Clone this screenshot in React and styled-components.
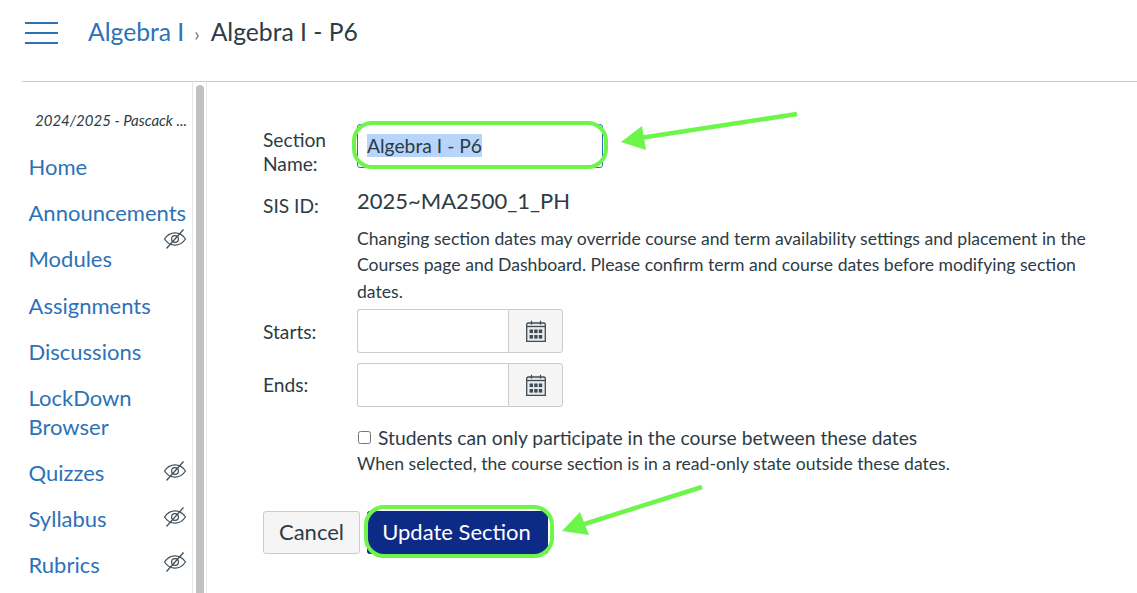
import React from 'react';
import styled, { createGlobalStyle } from 'styled-components';

const Global = createGlobalStyle`
  html, body { margin: 0; padding: 0; height: 593px; overflow: hidden; background: #fff; }
  body { font-family: Lato, "Open Sans", sans-serif; color: #2d3b45; }
  * { box-sizing: border-box; }
`;
const Page = styled.div`position: relative; width: 1137px; height: 593px; overflow: hidden;`;
const Header = styled.header`display: flex; align-items: center; height: 81px; padding: 0 0 15px 25px;`;
const Burger = styled.button`
  display: flex; flex-direction: column; justify-content: space-between; width: 33px; height: 22px;
  padding: 0; border: 0; background: none; margin: 0 30px 0 0;
  span { display: block; height: 2px; background: #2d72b8; }
`;
const Crumbs = styled.nav`display: flex; align-items: baseline; font-size: 24.7px; line-height: 30px;`;
const CrumbLink = styled.a`color: #2d72b8;`;
const CrumbSep = styled.span`font-size: 19px; color: #6b7780; margin: 0 11px 0 10px;`;
const Body = styled.div`display: flex; height: 512px; margin-left: 22px; border-top: 1px solid #c7cdd1;`;
const Sidebar = styled.aside`width: 170px; flex: none; padding-top: 28px;`;
const Term = styled.div`
  font-size: 15px; font-style: italic; line-height: 20px; padding-left: 13px; white-space: nowrap;
  overflow: hidden; text-overflow: ellipsis; margin-bottom: 22px;
`;
const NavList = styled.ul`list-style: none; margin: 0; padding: 0 0 0 6.5px;`;
const NavItem = styled.li`
  position: relative; font-size: 22px; line-height: 29px; color: #2d72b8; margin-bottom: 17.18px; white-space: pre-line;
`;
const EyeSlot = styled.span`position: absolute; left: 134.5px; top: ${p => p.$top}px; display: block; line-height: 0;`;
const Track = styled.div`
  width: 15px; flex: none; padding: 3px 2px 0 3px; border-left: 1px solid #e8e8e8; border-right: 1px solid #e8e8e8;
`;
const Thumb = styled.div`height: 100%; background: #c1c1c1; border-radius: 4px 4px 0 0;`;
const Main = styled.main`flex: 1; padding: 42px 0 0 56px; position: relative;`;
const Row = styled.div`display: grid; grid-template-columns: 94px 1fr; align-items: start; margin-bottom: ${p => p.$mb || 0}px;`;
const Label = styled.label`display: block; font-size: 19.2px; line-height: 24px; margin-top: ${p => p.$mt || 0}px;`;
const NameBox = styled.div`
  position: relative; width: 246px; height: 44px; display: flex; align-items: center; padding: 0 0 2px 9px;
  border: 1px solid #2d72b8; border-radius: 3px; font-size: 19.3px;
`;
const Selected = styled.span`background: #b7d5fb; line-height: 23px;`;
const Ring = styled.span`
  position: absolute; border: 4.5px solid #6ef54c; pointer-events: none;
  left: ${p => p.$l}px; right: ${p => p.$r}px; top: ${p => p.$t}px; bottom: ${p => p.$b}px; border-radius: ${p => p.$rad}px;
`;
const SisValue = styled.div`font-size: 22px; line-height: 28px; margin-top: -1px;`;
const Help = styled.p`margin: 0 0 4px 94px; width: 735px; font-size: 17.6px; line-height: 26.33px;`;
const DateGroup = styled.div`display: flex; width: 206px; height: 44px;`;
const DateInput = styled.div`flex: 1; border: 1px solid #c7cdd1; border-right: 0; border-radius: 3px 0 0 3px; background: #fff;`;
const DateBtn = styled.button`
  width: 55px; padding: 0; display: flex; align-items: center; justify-content: center;
  border: 1px solid #c7cdd1; border-radius: 0 3px 3px 0; background: #f5f5f5;
`;
const CheckRow = styled.div`display: flex; align-items: center; margin: 19px 0 0 94px; font-size: 19.25px; line-height: 24px;`;
const Check = styled.input`width: 13px; height: 13px; margin: 0 7px 0 1px;`;
const Note = styled.div`margin: 1px 0 0 94px; font-size: 17.6px; line-height: 26px;`;
const Actions = styled.div`display: flex; gap: 7px; margin-top: 34px;`;
const CancelBtn = styled.button`
  width: 97px; height: 43px; border: 1px solid #c7cdd1; border-radius: 3px; background: #f5f5f5;
  font: 400 22px Lato, sans-serif; color: #2d3b45; padding: 0 0 2px;
`;
const UpdateBtn = styled.button`
  position: relative; width: 181px; height: 43px; border: 0; border-radius: 3px; background: #0e2a87;
  font: 400 22px Lato, sans-serif; color: #fff; padding: 0 2px 2px 0;
`;
const Overlay = styled.svg`position: absolute; left: 0; top: 0; pointer-events: none;`;

const Eye = () => (
  <svg width="24" height="22" viewBox="0 0 24 22" fill="none" stroke="#3d4b55" strokeWidth="1.2">
    <path d="M1.5 11C4.5 6.6 8 4.8 12 4.8S19.5 6.6 22.5 11C19.5 15.4 16 17.2 12 17.2S4.5 15.4 1.5 11Z" />
    <circle cx="12" cy="11" r="3.4" />
    <path d="M3.5 20.5 20.5 1.5" />
  </svg>
);
const Calendar = () => (
  <svg width="20" height="22" viewBox="0 0 20 22" fill="none" stroke="#3d4b55">
    <path d="M.7 4.5Q.7 3 2.2 3H17.8Q19.3 3 19.3 4.5V21.3H.7Z" fill="#e9ebec" strokeWidth="1.3" />
    <path d="M.7 6.5H19.3" strokeWidth="1.3" />
    <path d="M5.5 .8V4.5M14.5 .8V4.5" strokeWidth="1.3" />
    <g fill="#3d4b55" stroke="none">
      {[3.6, 8.2, 12.8].map(x => [9.5, 15].map(y => <rect key={x + '-' + y} x={x} y={y} width="3.4" height="3.6" />))}
    </g>
  </svg>
);

const nav = [
  ['Home'],
  ['Announcements', 30],
  ['Modules'],
  ['Assignments'],
  ['Discussions'],
  ['LockDown\nBrowser'],
  ['Quizzes', 2],
  ['Syllabus', 1.5],
  ['Rubrics', 1],
];

export default function App() {
  return (
    <Page>
      <Global />
      <Header>
        <Burger aria-label="Menu"><span /><span /><span /></Burger>
        <Crumbs>
          <CrumbLink>Algebra I</CrumbLink>
          <CrumbSep>›</CrumbSep>
          <span>Algebra I - P6</span>
        </Crumbs>
      </Header>
      <Body>
        <Sidebar>
          <Term>2024/2025 - Pascack ...</Term>
          <NavList>
            {nav.map(([t, eye]) => (
              <NavItem key={t}>
                {t}
                {eye !== undefined && <EyeSlot $top={eye}><Eye /></EyeSlot>}
              </NavItem>
            ))}
          </NavList>
        </Sidebar>
        <Track><Thumb /></Track>
        <Main>
          <Row $mb={12}>
            <Label $mt={4}>Section<br />Name:</Label>
            <NameBox>
              <Selected>Algebra I - P6</Selected>
              <Ring $l={-6} $r={-6} $t={-4} $b={-2} $rad={20} />
            </NameBox>
          </Row>
          <Row $mb={8}>
            <Label $mt={6}>SIS ID:</Label>
            <SisValue>2025~MA2500_1_PH</SisValue>
          </Row>
          <Help>Changing section dates may override course and term availability settings and placement in the Courses page and Dashboard. Please confirm term and course dates before modifying section dates.</Help>
          <Row $mb={10}>
            <Label $mt={11}>Starts:</Label>
            <DateGroup><DateInput /><DateBtn aria-label="Pick start date"><Calendar /></DateBtn></DateGroup>
          </Row>
          <Row>
            <Label $mt={10}>Ends:</Label>
            <DateGroup><DateInput /><DateBtn aria-label="Pick end date"><Calendar /></DateBtn></DateGroup>
          </Row>
          <CheckRow>
            <Check type="checkbox" />
            Students can only participate in the course between these dates
          </CheckRow>
          <Note>When selected, the course section is in a read-only state outside these dates.</Note>
          <Actions>
            <CancelBtn>Cancel</CancelBtn>
            <UpdateBtn>
              Update Section
              <Ring $l={-3} $r={-6} $t={-6} $b={-4} $rad={20} />
            </UpdateBtn>
          </Actions>
        </Main>
      </Body>
      <Overlay width="1137" height="593" viewBox="0 0 1137 593">
        <path d="M797 114 640 138" stroke="#6ef54c" strokeWidth="4.5" fill="none" />
        <path d="M621 142 642 126 646 150Z" fill="#6ef54c" />
        <path d="M702 487 578 526" stroke="#6ef54c" strokeWidth="4.5" fill="none" />
        <path d="M562 531 580 512 589 535Z" fill="#6ef54c" />
      </Overlay>
    </Page>
  );
}
